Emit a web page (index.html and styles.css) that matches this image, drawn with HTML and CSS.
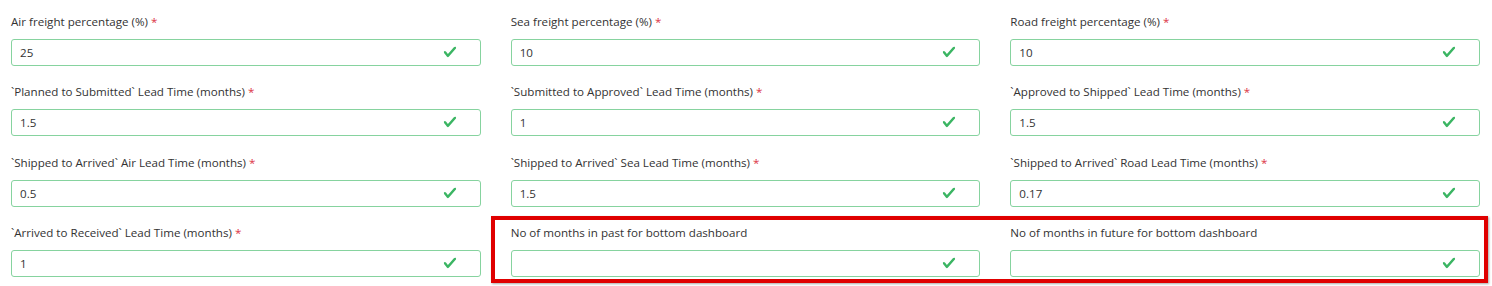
FILE: index.html
```html
<!DOCTYPE html>
<html lang="en">
<head>
    <meta charset="UTF-8">
    <meta name="viewport" content="width=device-width, initial-scale=1.0">
    <title>Settings</title>
    <link rel="stylesheet" href="styles.css">
</head>
<body>
    <form class="settings-form">
        <div class="form-group">
            <label>Air freight percentage (%) <span class="req">*</span></label>
            <div class="field"><input type="text" value="25"><svg class="check" viewBox="0 0 8 8"><path d="M2.3 6.73L.6 4.53c-.4-1.04.46-1.4 1.1-.8l1.1 1.4 3.4-3.8c.6-.63 1.6-.27 1.2.7l-4 4.6c-.43.5-.8.4-1.1.1z"/></svg></div>
        </div>
        <div class="form-group">
            <label>Sea freight percentage (%) <span class="req">*</span></label>
            <div class="field"><input type="text" value="10"><svg class="check" viewBox="0 0 8 8"><path d="M2.3 6.73L.6 4.53c-.4-1.04.46-1.4 1.1-.8l1.1 1.4 3.4-3.8c.6-.63 1.6-.27 1.2.7l-4 4.6c-.43.5-.8.4-1.1.1z"/></svg></div>
        </div>
        <div class="form-group">
            <label>Road freight percentage (%) <span class="req">*</span></label>
            <div class="field"><input type="text" value="10"><svg class="check" viewBox="0 0 8 8"><path d="M2.3 6.73L.6 4.53c-.4-1.04.46-1.4 1.1-.8l1.1 1.4 3.4-3.8c.6-.63 1.6-.27 1.2.7l-4 4.6c-.43.5-.8.4-1.1.1z"/></svg></div>
        </div>

        <div class="form-group">
            <label>`Planned to Submitted` Lead Time (months) <span class="req">*</span></label>
            <div class="field"><input type="text" value="1.5"><svg class="check" viewBox="0 0 8 8"><path d="M2.3 6.73L.6 4.53c-.4-1.04.46-1.4 1.1-.8l1.1 1.4 3.4-3.8c.6-.63 1.6-.27 1.2.7l-4 4.6c-.43.5-.8.4-1.1.1z"/></svg></div>
        </div>
        <div class="form-group">
            <label>`Submitted to Approved` Lead Time (months) <span class="req">*</span></label>
            <div class="field"><input type="text" value="1"><svg class="check" viewBox="0 0 8 8"><path d="M2.3 6.73L.6 4.53c-.4-1.04.46-1.4 1.1-.8l1.1 1.4 3.4-3.8c.6-.63 1.6-.27 1.2.7l-4 4.6c-.43.5-.8.4-1.1.1z"/></svg></div>
        </div>
        <div class="form-group">
            <label>`Approved to Shipped` Lead Time (months) <span class="req">*</span></label>
            <div class="field"><input type="text" value="1.5"><svg class="check" viewBox="0 0 8 8"><path d="M2.3 6.73L.6 4.53c-.4-1.04.46-1.4 1.1-.8l1.1 1.4 3.4-3.8c.6-.63 1.6-.27 1.2.7l-4 4.6c-.43.5-.8.4-1.1.1z"/></svg></div>
        </div>

        <div class="form-group">
            <label>`Shipped to Arrived` Air Lead Time (months) <span class="req">*</span></label>
            <div class="field"><input type="text" value="0.5"><svg class="check" viewBox="0 0 8 8"><path d="M2.3 6.73L.6 4.53c-.4-1.04.46-1.4 1.1-.8l1.1 1.4 3.4-3.8c.6-.63 1.6-.27 1.2.7l-4 4.6c-.43.5-.8.4-1.1.1z"/></svg></div>
        </div>
        <div class="form-group">
            <label>`Shipped to Arrived` Sea Lead Time (months) <span class="req">*</span></label>
            <div class="field"><input type="text" value="1.5"><svg class="check" viewBox="0 0 8 8"><path d="M2.3 6.73L.6 4.53c-.4-1.04.46-1.4 1.1-.8l1.1 1.4 3.4-3.8c.6-.63 1.6-.27 1.2.7l-4 4.6c-.43.5-.8.4-1.1.1z"/></svg></div>
        </div>
        <div class="form-group">
            <label>`Shipped to Arrived` Road Lead Time (months) <span class="req">*</span></label>
            <div class="field"><input type="text" value="0.17"><svg class="check" viewBox="0 0 8 8"><path d="M2.3 6.73L.6 4.53c-.4-1.04.46-1.4 1.1-.8l1.1 1.4 3.4-3.8c.6-.63 1.6-.27 1.2.7l-4 4.6c-.43.5-.8.4-1.1.1z"/></svg></div>
        </div>

        <div class="form-group">
            <label>`Arrived to Received` Lead Time (months) <span class="req">*</span></label>
            <div class="field"><input type="text" value="1"><svg class="check" viewBox="0 0 8 8"><path d="M2.3 6.73L.6 4.53c-.4-1.04.46-1.4 1.1-.8l1.1 1.4 3.4-3.8c.6-.63 1.6-.27 1.2.7l-4 4.6c-.43.5-.8.4-1.1.1z"/></svg></div>
        </div>
        <div class="form-group">
            <label>No of months in past for bottom dashboard</label>
            <div class="field"><input type="text" value=""><svg class="check" viewBox="0 0 8 8"><path d="M2.3 6.73L.6 4.53c-.4-1.04.46-1.4 1.1-.8l1.1 1.4 3.4-3.8c.6-.63 1.6-.27 1.2.7l-4 4.6c-.43.5-.8.4-1.1.1z"/></svg></div>
        </div>
        <div class="form-group">
            <label>No of months in future for bottom dashboard</label>
            <div class="field"><input type="text" value=""><svg class="check" viewBox="0 0 8 8"><path d="M2.3 6.73L.6 4.53c-.4-1.04.46-1.4 1.1-.8l1.1 1.4 3.4-3.8c.6-.63 1.6-.27 1.2.7l-4 4.6c-.43.5-.8.4-1.1.1z"/></svg></div>
        </div>

        <!-- annotation drawn over the last two fields -->
        <div class="highlight"></div>
    </form>
</body>
</html>
```

FILE: styles.css
```css
body {
    margin: 0;
    background-color: #fff;
    font-family: "Open Sans", "Noto Sans", sans-serif;
    color: #333;
}
.settings-form {
    position: relative;
    display: grid;
    grid-template-columns: repeat(3, 1fr);
    column-gap: 30px;
    padding: 12px 12px 0 11px;
}
.form-group {
    display: flex;
    flex-direction: column;
    margin-bottom: 16.4px;
}
label {
    font-size: 11.6px;
    line-height: 20px;
    margin-bottom: 7px;
    white-space: nowrap;
}
.req {
    color: #dc3545;
}
.field {
    position: relative;
}
.field input {
    box-sizing: border-box;
    width: 100%;
    height: 27px;
    padding: 0 32px 0 8px;
    border: 1px solid #86d39f;
    border-radius: 3px;
    font-family: inherit;
    font-size: 11.6px;
    color: #333;
    background: #fff;
    outline: none;
}
.check {
    position: absolute;
    right: 24px;
    top: 6px;
    width: 14px;
    height: 14px;
    fill: #3bb563;
}
.highlight {
    position: absolute;
    left: 491px;
    top: 216px;
    width: 989px;
    height: 59px;
    border: 4px solid #e00000;
    box-shadow: 1px 1px 2px rgba(0,0,0,0.35);
    pointer-events: none;
}
```
